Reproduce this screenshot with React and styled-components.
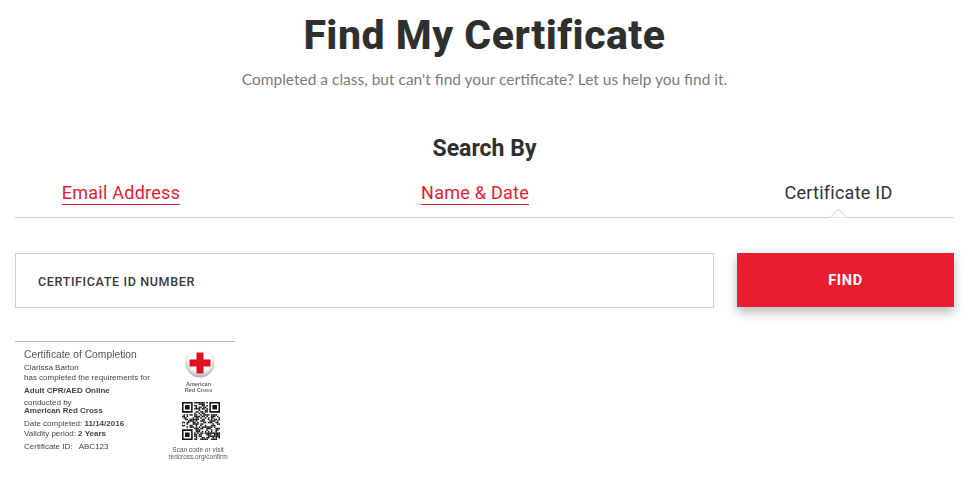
import React from "react";
import styled, { createGlobalStyle } from "styled-components";

const GlobalStyle = createGlobalStyle`
  html, body {
    margin: 0;
    padding: 0;
    background: #fff;
  }
`;

const Page = styled.div`
  width: 939px;
  margin-left: 15px;
  font-family: Roboto, sans-serif;
  color: #2f2f2f;
`;

const Title = styled.h1`
  margin: 0;
  padding-top: 12px;
  font-size: 41px;
  line-height: 47px;
  font-weight: 800;
  text-align: center;
  letter-spacing: 0.5px;
`;

const Subtitle = styled.p`
  margin: 9px 0 0;
  font-family: Lato, sans-serif;
  font-size: 15.5px;
  line-height: 22px;
  color: #7b7b7b;
  text-align: center;
`;

const SearchHeading = styled.h2`
  margin: 46px 0 0;
  font-size: 23px;
  line-height: 26px;
  font-weight: 700;
  text-align: center;
`;

const Tabs = styled.div`
  display: grid;
  grid-template-columns: 212px 496px 231px;
  height: 46px;
  margin-top: 10px;
  padding-top: 10px;
  box-sizing: border-box;
  border-bottom: 1px solid #cfcfcf;
`;

const TabCell = styled.div`
  display: flex;
  justify-content: center;
  position: relative;
  height: 35px;
`;

const TabLink = styled.a`
  font-size: 18px;
  line-height: 21px;
  height: 22px;
  color: ${p => (p.$active ? "#333" : "#e21d2f")};
  border-bottom: ${p => (p.$active ? "none" : "1px solid #e21d2f")};
  letter-spacing: 0.25px;
`;

const Notch = styled.span`
  position: absolute;
  left: 50%;
  bottom: -7px;
  width: 13px;
  height: 13px;
  margin-left: -7px;
  box-sizing: border-box;
  background: #fff;
  border-top: 1px solid #cfcfcf;
  border-left: 1px solid #cfcfcf;
  transform: rotate(45deg);
  clip-path: polygon(0 0, 100% 0, 0 100%);
`;

const SearchRow = styled.form`
  display: flex;
  gap: 23px;
  margin-top: 35px;
  align-items: flex-start;
`;

const IdInput = styled.input`
  width: 699px;
  height: 55px;
  box-sizing: border-box;
  padding: 1px 22px 0;
  border: 1px solid #cfcfcf;
  border-radius: 0;
  outline: none;
  font-family: Roboto, sans-serif;
  font-size: 12.6px;
  font-weight: 500;
  letter-spacing: 0.6px;

  &::placeholder {
    color: #3a3a3a;
    opacity: 1;
  }
`;

const FindButton = styled.button`
  width: 217px;
  height: 54px;
  border: 0;
  background: #ea1c2f;
  color: #fff;
  font-family: Roboto, sans-serif;
  font-size: 14.5px;
  font-weight: 700;
  letter-spacing: 0.7px;
  box-shadow: 0 5px 10px rgba(0, 0, 0, 0.28);
  cursor: pointer;
`;

const Sample = styled.div`
  display: flex;
  justify-content: space-between;
  width: 220px;
  height: 124px;
  margin-top: 33px;
  box-sizing: border-box;
  padding: 7px 6px 0 9px;
  border-top: 1px solid #b9b9b9;
  font-family: "Liberation Sans", Arial, sans-serif;
  color: #444;
  filter: blur(0.4px);
`;

const SampleText = styled.div`
  display: flex;
  flex-direction: column;
`;

const SampleTitle = styled.div`
  font-size: 10.3px;
  line-height: 12px;
  color: #555;
`;

const SampleLine = styled.div`
  font-size: 8px;
  line-height: 9px;
  margin-top: ${p => p.$gap || 0}px;
  font-weight: ${p => (p.$bold ? 700 : 400)};
  white-space: nowrap;
  b {
    font-weight: 700;
  }
`;

const SampleSide = styled.div`
  display: flex;
  flex-direction: column;
  align-items: center;
  width: 62px;
  margin-top: -1px;
`;

const Brand = styled.div`
  margin-top: 4px;
  padding-left: 1px;
  font-size: 5.5px;
  line-height: 5.5px;
  font-weight: 700;
  text-align: center;
  color: #666;
`;

const ScanNote = styled.div`
  margin-top: 6px;
  font-size: 6.5px;
  line-height: 7px;
  text-align: center;
  white-space: nowrap;
  color: #555;
`;

const QrWrap = styled.svg`
  display: block;
  margin: 9px 0 0 6px;
`;

const BadgeWrap = styled.svg`
  display: block;
  margin-left: 3px;
`;

const CrossBadge = () => (
  <BadgeWrap width="30" height="30" viewBox="0 0 30 30">
    <defs>
      <radialGradient id="badge" cx="50%" cy="40%" r="60%">
        <stop offset="65%" stopColor="#ffffff" />
        <stop offset="100%" stopColor="#a8a8a8" />
      </radialGradient>
    </defs>
    <circle cx="15" cy="15" r="14.5" fill="url(#badge)" />
    <path d="M11.5 4.5h7v7H25.5v7h-7v7h-7v-7H4.5v-7h7z" fill="#e0101f" />
  </BadgeWrap>
);

const QR_SIZE = 25;

const inFinder = (x, y) =>
  (x < 8 && y < 8) || (x >= QR_SIZE - 8 && y < 8) || (x < 8 && y >= QR_SIZE - 8);

// not a real code, just modules that read like one at this size
const qrModules = () => {
  const cells = [];
  let seed = 7;
  for (let y = 0; y < QR_SIZE; y++) {
    for (let x = 0; x < QR_SIZE; x++) {
      seed = (seed * 75 + 74) % 65537;
      if (!inFinder(x, y) && seed % 100 < 55) cells.push([x, y]);
    }
  }
  return cells;
};

const Finder = ({ x, y }) => (
  <path
    d={`M${x} ${y}h7v7h-7z M${x + 1} ${y + 1}v5h5v-5z M${x + 2} ${y + 2}h3v3h-3z`}
    fillRule="evenodd"
  />
);

const QrCode = () => (
  <QrWrap width="38" height="38" viewBox={`0 0 ${QR_SIZE} ${QR_SIZE}`} fill="#111">
    <Finder x={0} y={0} />
    <Finder x={QR_SIZE - 7} y={0} />
    <Finder x={0} y={QR_SIZE - 7} />
    {qrModules().map(([x, y]) => (
      <rect key={`${x}-${y}`} x={x} y={y} width="1" height="1" />
    ))}
  </QrWrap>
);

const App = () => (
  <Page>
    <GlobalStyle />
    <Title>Find My Certificate</Title>
    <Subtitle>Completed a class, but can't find your certificate? Let us help you find it.</Subtitle>
    <SearchHeading>Search By</SearchHeading>
    <Tabs>
      <TabCell>
        <TabLink>Email Address</TabLink>
      </TabCell>
      <TabCell>
        <TabLink>Name &amp; Date</TabLink>
      </TabCell>
      <TabCell>
        <TabLink $active>Certificate ID</TabLink>
        <Notch />
      </TabCell>
    </Tabs>
    <SearchRow onSubmit={e => e.preventDefault()}>
      <IdInput placeholder="CERTIFICATE ID NUMBER" />
      <FindButton>FIND</FindButton>
    </SearchRow>
    <Sample>
      <SampleText>
        <SampleTitle>Certificate of Completion</SampleTitle>
        <SampleLine $gap={1.5}>Clarissa Barton</SampleLine>
        <SampleLine $gap={1}>has completed the requirements for</SampleLine>
        <SampleLine $gap={4} $bold>Adult CPR/AED Online</SampleLine>
        <SampleLine $gap={3}>conducted by</SampleLine>
        <SampleLine $gap={-1} $bold>American Red Cross</SampleLine>
        <SampleLine $gap={4}>Date completed: <b>11/14/2016</b></SampleLine>
        <SampleLine $gap={1}>Validity period: <b>2 Years</b></SampleLine>
        <SampleLine $gap={4}>Certificate ID:&nbsp;&nbsp; ABC123</SampleLine>
      </SampleText>
      <SampleSide>
        <CrossBadge />
        <Brand>American<br />Red Cross</Brand>
        <QrCode />
        <ScanNote>Scan code or visit<br />redcross.org/confirm</ScanNote>
      </SampleSide>
    </Sample>
  </Page>
);

export default App;
